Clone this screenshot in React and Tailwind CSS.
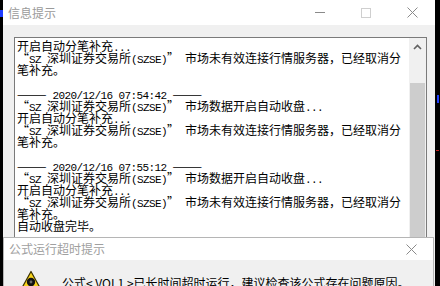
import React from "react";

const lines = [
  "开启自动分笔补充...",
  "“SZ 深圳证券交易所(SZSE)” 市场未有效连接行情服务器，已经取消分",
  "笔补充。",
  "",
  "——— 2020/12/16 07:54:42 ———",
  "“SZ 深圳证券交易所(SZSE)” 市场数据开启自动收盘...",
  "开启自动分笔补充...",
  "“SZ 深圳证券交易所(SZSE)” 市场未有效连接行情服务器，已经取消分",
  "笔补充。",
  "",
  "——— 2020/12/16 07:55:12 ———",
  "“SZ 深圳证券交易所(SZSE)” 市场数据开启自动收盘...",
  "开启自动分笔补充...",
  "“SZ 深圳证券交易所(SZSE)” 市场未有效连接行情服务器，已经取消分",
  "笔补充。",
  "自动收盘完毕。",
];

// ascii runs get a half-width mono face, like the old bitmap song font
function Line({ text }) {
  const parts = text.split(/([\x20-\x7e]+)/).filter(Boolean);
  return (
    <div className="h-[12px] whitespace-pre leading-[12px]">
      {parts.map((p, i) =>
        /^[\x20-\x7e]+$/.test(p) ? (
          <span key={i} className="font-['Liberation_Mono'] text-[11px] tracking-[-0.6px]">{p}</span>
        ) : (
          <span key={i}>{p}</span>
        )
      )}
    </div>
  );
}

function CloseIcon({ className }) {
  return (
    <svg width="11" height="11" viewBox="0 0 11 11" className={className}>
      <path d="M0.5 0.5 L10.5 10.5 M10.5 0.5 L0.5 10.5" stroke="currentColor" strokeWidth="1" />
    </svg>
  );
}

function WarnIcon() {
  return (
    <svg width="28" height="26" viewBox="0 0 28 26">
      <path d="M14 1.5 L27 25 L1 25 Z" fill="#f7d21b" stroke="#3a3000" strokeWidth="1.2" strokeLinejoin="round" />
      <circle cx="14" cy="12" r="4.2" fill="#111" />
      <circle cx="14" cy="12" r="1.4" fill="#6b6b6b" />
      <path d="M12 16 L16 16 L15 22 L13 22 Z" fill="#111" />
    </svg>
  );
}

export default function App() {
  return (
    <div className="relative h-[286px] w-[440px] overflow-hidden bg-black font-['Noto_Sans_CJK_SC',sans-serif] text-[12px] text-black">
      <div className="absolute left-0 top-[10px] h-[7px] w-[3px] bg-[#1e3cff]" />
      <div className="absolute right-[1px] top-[95px] h-[8px] w-[2px] bg-[#2040ff]" />
      <div className="absolute right-[1px] top-[150px] h-[1px] w-[3px] bg-[#c02020]" />

      {/* main window */}
      <div className="absolute left-[3px] top-0 flex h-[300px] w-[432px] flex-col">
        <div className="flex h-[25px] items-center bg-white">
          <span className="pl-[5px] text-[12px] text-[#9a9a9a]">信息提示</span>
          <div className="ml-auto flex h-full">
            <div className="flex w-[46px] items-center justify-center">
              <div className="h-px w-[10px] bg-[#8a8a8a]" />
            </div>
            <div className="flex w-[46px] items-center justify-center">
              <div className="h-[10px] w-[10px] border border-[#cfcfcf]" />
            </div>
            <div className="flex w-[46px] items-center justify-center">
              <CloseIcon className="text-[#8a8a8a]" />
            </div>
          </div>
        </div>
        <div className="flex-1 bg-[#f0f0f0] pl-[11px] pr-[8px] pt-[12px]">
          <div className="flex h-[260px] border border-[#7a7a7a] bg-white">
            <div className="flex-1 pl-[2px] pt-[2px]">
              {lines.map((t, i) => (
                <Line key={i} text={t} />
              ))}
            </div>
            <div className="flex w-[17px] flex-col bg-[#f0f0f0]">
              <div className="flex h-[17px] items-center justify-center">
                <svg width="9" height="6" viewBox="0 0 9 6">
                  <path d="M1 5 L4.5 1.5 L8 5" fill="none" stroke="#606060" strokeWidth="1.6" />
                </svg>
              </div>
              <div className="h-[28px]" />
              <div className="mx-[1px] flex-1 bg-[#cdcdcd]" />
            </div>
          </div>
        </div>
      </div>

      {/* timeout dialog */}
      <div className="absolute left-[3px] top-[237px] flex h-[60px] w-[431px] flex-col border border-[#b5b5b5]">
        <div className="flex h-[25px] items-center bg-white">
          <span className="pl-[5px] text-[12px] text-[#a0a0a0]">公式运行超时提示</span>
          <div className="ml-auto flex w-[46px] items-center justify-center pl-[2px]">
            <CloseIcon className="text-[#8a8a8a]" />
          </div>
        </div>
        <div className="flex flex-1 items-start gap-[17px] bg-[#f0f0f0] pl-[13px] pt-[10px]">
          <WarnIcon />
          <span className="pt-[5px] leading-[16px]">公式&lt; VOL1 &gt;已长时间超时运行，建议检查该公式存在问题原因。</span>
        </div>
      </div>
    </div>
  );
}
